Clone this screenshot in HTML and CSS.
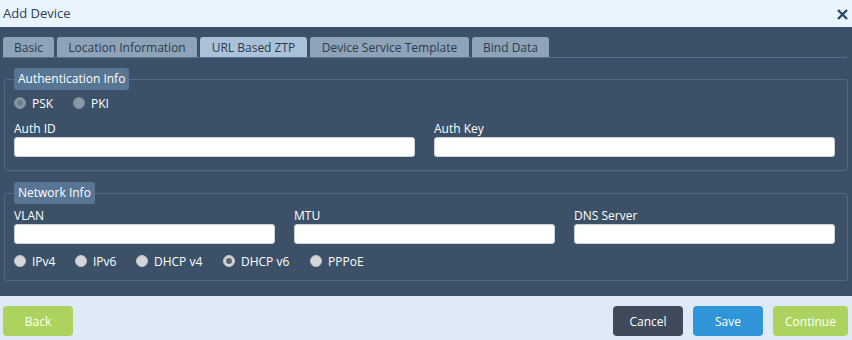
FILE: index.html
```html
<!DOCTYPE html>
<html>
<head>
<meta charset="utf-8">
<link rel="stylesheet" href="styles.css">
</head>
<body>
<div class="dialog">
  <div class="titlebar">
    <span class="title">Add Device</span>
    <svg class="close" width="11" height="11" viewBox="0 0 11 11"><path d="M1 1L10 10M10 1L1 10" stroke="#2a4a6a" stroke-width="2.4" stroke-linecap="butt"/></svg>
  </div>
  <div class="body">
    <div class="tabs">
      <div class="tab t1">Basic</div>
      <div class="tab t2">Location Information</div>
      <div class="tab t3 active">URL Based ZTP</div>
      <div class="tab t4">Device Service Template</div>
      <div class="tab t5">Bind Data</div>
    </div>
    <fieldset class="group g1">
      <legend>Authentication Info</legend>
      <div class="radios auth">
        <label class="radio"><span class="dot dim checked"></span>PSK</label>
        <label class="radio"><span class="dot dim"></span>PKI</label>
      </div>
      <div class="row two">
        <div class="field"><div class="label">Auth ID</div><div class="input"></div></div>
        <div class="field"><div class="label">Auth Key</div><div class="input"></div></div>
      </div>
    </fieldset>
    <fieldset class="group g2">
      <legend>Network Info</legend>
      <div class="row three">
        <div class="field"><div class="label">VLAN</div><div class="input"></div></div>
        <div class="field"><div class="label">MTU</div><div class="input"></div></div>
        <div class="field"><div class="label">DNS Server</div><div class="input"></div></div>
      </div>
      <div class="radios net">
        <label class="radio"><span class="dot"></span>IPv4</label>
        <label class="radio"><span class="dot"></span>IPv6</label>
        <label class="radio"><span class="dot"></span>DHCP v4</label>
        <label class="radio"><span class="dot checked"></span>DHCP v6</label>
        <label class="radio"><span class="dot"></span>PPPoE</label>
      </div>
    </fieldset>
  </div>
  <div class="footer">
    <button class="btn green">Back</button>
    <div class="spacer"></div>
    <button class="btn dark">Cancel</button>
    <button class="btn blue">Save</button>
    <button class="btn green wide">Continue</button>
  </div>
</div>
</body>
</html>
```
FILE: styles.css
```css
* { box-sizing: border-box; }
html, body { margin: 0; padding: 0; }
body {
  width: 852px;
  height: 340px;
  font-family: "Open Sans", "Noto Sans", sans-serif;
  font-size: 12px;
  color: #fff;
  background: #deebf7;
  overflow: hidden;
}
.dialog { width: 852px; height: 340px; display: flex; flex-direction: column; }
.titlebar {
  height: 27px;
  background: #eaf4fd;
  display: flex;
  align-items: center;
  justify-content: space-between;
  padding: 0 4px 1px 3px;
}
.title { color: #2b3f55; font-size: 13px; }
.close { margin-top: 2px; }
.body {
  background: #3c5168;
  height: 269px;
  padding: 10px 4px 0 3px;
}
.tabs {
  display: flex;
  gap: 3px;
  height: 21px;
  border-bottom: 1px solid #53708d;
  margin-right: 1px;
}
.tab {
  background: #8fa3b8;
  color: #2b3b4e;
  line-height: 21px;
  text-align: center;
  border-radius: 3px 3px 0 0;
  font-size: 12px;
  white-space: nowrap;
}
.t1 { width: 51px; }
.t2 { width: 140px; }
.t3 { width: 107px; }
.t4 { width: 159px; }
.t5 { width: 77px; }
.tab.active { background: #a9c1d9; }
.group {
  border: 1px solid #52697f;
  border-radius: 3px;
  margin: 0 0 0 1px;
  padding: 0 10px 0 9px;
  min-width: 0;
}
.g1 { margin-top: 10px; height: 103px; }
.g2 { margin-top: 11px; height: 99px; }
legend {
  background: #587693;
  color: #fff;
  border-radius: 3px;
  padding: 0 4px;
  height: 22px;
  line-height: 22px;
  font-size: 12px;
  margin-left: 0;
}
.radios { display: flex; gap: 0; height: 20px; align-items: center; }
.radios.auth { margin-top: 3px; }
.radios.auth .radio { margin-right: 0; }
.radios.auth .radio:first-child { width: 59px; }
.radio { display: flex; align-items: center; margin-right: 18px; font-size: 12px; }
.dot {
  width: 12px; height: 12px;
  border-radius: 50%;
  background: #d4d6d9;
  border: 1px solid #c2c4c7;
  margin-right: 6px;
  position: relative;
}
.dot.dim { background: #8a97a5; border-color: #7f8c99; }
.dot.checked::after {
  content: "";
  position: absolute;
  left: 2px; top: 2px;
  width: 6px; height: 6px;
  border-radius: 50%;
  background: #666;
}
.dot.dim.checked::after { background: #6f7b88; }
.row { display: grid; gap: 19px; }
.row.two { grid-template-columns: 401px 401px; margin-top: 8px; }
.row.three { grid-template-columns: 261px 261px 261px; margin-top: 4px; }
.label { height: 15px; line-height: 15px; font-size: 12px; margin-bottom: 1px; }
.input {
  height: 20px;
  background: #fff;
  border: 1px solid #c8d3de;
  border-radius: 3px;
}
.radios.net { margin-top: 7px; }
.radios.net .radio { margin-right: 0; }
.radios.net .radio:nth-child(1) { width: 61px; }
.radios.net .radio:nth-child(2) { width: 61px; }
.radios.net .radio:nth-child(3) { width: 87px; }
.radios.net .radio:nth-child(4) { width: 87px; }
.footer {
  flex: 1;
  display: flex;
  align-items: flex-start;
  padding: 10px 4px 0 3px;
  gap: 10px;
}
.spacer { flex: 1; }
.btn {
  font-family: "Open Sans", "Noto Sans", sans-serif;
  font-size: 12px;
  width: 70px;
  height: 30px;
  border: none;
  border-radius: 4px;
  color: #fff;
  padding: 0;
}
.btn.wide { width: 75px; }
.green { background: #acd35d; }
.dark { background: #3f4a5b; }
.blue { background: #3095d9; }
```
